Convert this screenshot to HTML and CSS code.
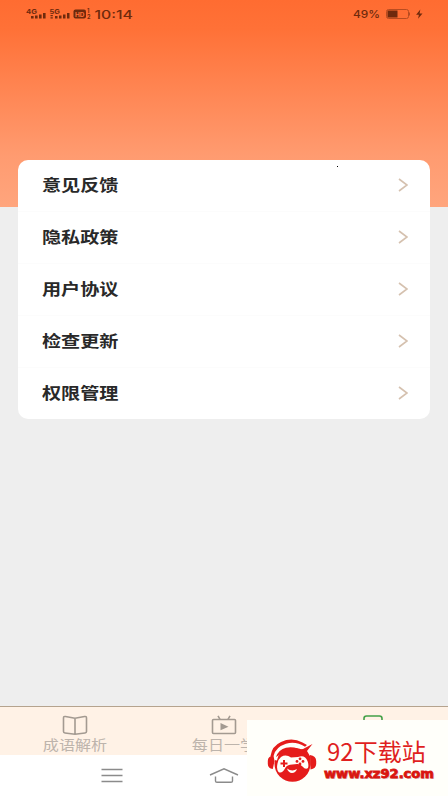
FILE: index.html
```html
<!DOCTYPE html>
<html lang="zh-CN">
<head>
<meta charset="utf-8">
<title>设置</title>
<link rel="stylesheet" href="styles.css">
</head>
<body>
<div class="screen">
  <header class="hero">
    <svg class="status" width="448" height="28" viewBox="0 0 448 28">
      <g class="status-ink">
        <text x="26" y="14" class="net" textLength="11" lengthAdjust="spacingAndGlyphs">4G</text>
        <path d="M31 16h2.6v2.5H31zM35 15.5h2.6v3H35zM39 14.5h2.6v4H39zM43 13h2.6v5.5H43z"/>
        <text x="49.500" y="14" class="net" textLength="10.500" lengthAdjust="spacingAndGlyphs">5G</text>
        <path d="M50.500 15h2.300v1.200h-2.300zM50.500 17.300h2.300v1.200h-2.300zM55 16h2.500v2.500H55zM59 15.500h2.500v3H59zM63 14.500h2.500v4H63zM67 13h2.500v5.500H67z"/>
        <rect x="73.500" y="9.500" width="12.500" height="9" rx="2"/>
        <text x="75" y="16.700" class="hd" textLength="9.500" lengthAdjust="spacingAndGlyphs">HD</text>
        <text x="87" y="13" class="sim">1</text>
        <text x="87" y="19" class="sim">2</text>
        <text x="94.500" y="18.500" class="clock" textLength="38.500" lengthAdjust="spacingAndGlyphs">10:14</text>
        <text x="353" y="18" class="percent" textLength="27" lengthAdjust="spacingAndGlyphs">49%</text>
        <rect class="battery" x="386.500" y="9.500" width="22" height="9" rx="2"/>
        <rect x="387.500" y="10.500" width="10" height="7"/>
        <path class="battery" d="M409.500 12.500v3"/>
        <path d="M420.300 9.500l-4.200 5.200h2.800l-.8 4 4.400-5.300h-2.900z"/>
      </g>
    </svg>
  </header>

  <main class="card">
    <i class="speck"></i>
    <div class="row"><span class="label">意见反馈</span><svg class="chevron" viewBox="0 0 10 14"><path d="M1 1l8 6-8 6"/></svg></div>
    <div class="row"><span class="label">隐私政策</span><svg class="chevron" viewBox="0 0 10 14"><path d="M1 1l8 6-8 6"/></svg></div>
    <div class="row"><span class="label">用户协议</span><svg class="chevron" viewBox="0 0 10 14"><path d="M1 1l8 6-8 6"/></svg></div>
    <div class="row"><span class="label">检查更新</span><svg class="chevron" viewBox="0 0 10 14"><path d="M1 1l8 6-8 6"/></svg></div>
    <div class="row"><span class="label">权限管理</span><svg class="chevron" viewBox="0 0 10 14"><path d="M1 1l8 6-8 6"/></svg></div>
  </main>

  <footer class="bottom">
    <nav class="tabs">
      <div class="tab">
        <svg class="tab-icon" viewBox="0 0 26 22"><path d="M13 3.200L3.500 1.500Q1.500 1.200 1.500 3v13.500q0 1.300 1.500 1.500l10 1.200 10-1.200q1.500-.2 1.500-1.500V3q0-1.800-2-1.500zM13 3.200v16"/></svg>
        <span class="tab-label">成语解析</span>
      </div>
      <div class="tab">
        <svg class="tab-icon" viewBox="0 0 26 22"><rect x="1.500" y="4.500" width="23" height="14" rx="1"/><path d="M7 .8l2 3.500M19 .8l-2 3.500"/><path class="solid" d="M9.500 8l8 3.700-8 3.500z"/></svg>
        <span class="tab-label">每日一学</span>
      </div>
      <div class="tab active">
        <svg class="tab-icon" viewBox="0 0 26 22"><rect x="4" y="1" width="18" height="19" rx="2.500"/></svg>
      </div>
    </nav>
    <div class="system-nav">
      <div class="key"><svg width="22" height="16" viewBox="0 0 22 16"><path d="M.5 1.500h21M.5 7.500h21M.5 13.500h21"/></svg></div>
      <div class="key"><svg width="30" height="16" viewBox="0 0 30 16"><path d="M1 7L15 .8 29 7M6.500 8.500v4.500q0 1.300 1.500 1.300h14q1.500 0 1.500-1.300V8.500"/></svg></div>
    </div>
    <aside class="watermark">
      <svg class="mascot" viewBox="0 0 50 44">
        <ellipse class="red" cx="25.500" cy="25" rx="18" ry="17.800"/>
        <path class="halo" d="M7.500 21Q10 8.500 22 6.500q10-1.500 18 4"/>
        <path class="red" d="M6.500 16.500Q.8 17 .8 22v3q.2 4.500 5 5L7.500 22zM43 16Q49.200 17 49.200 22v3q-.2 4.500-5.700 5.500z"/>
        <path class="red" d="M3.500 17Q5 7 14 3q11-5 21.500.5L40 6l-2 1.700Q29 2 19 4.700 8.500 8 6.500 17z"/>
        <path class="red" d="M9 18Q11.500 10.500 19 8.700q7-1.700 13.500 1.800l3.500-.5 9.500-5-5.500 7 3.500 6V27l-6-11-7.500-3H17z"/>
        <path class="pad" d="M14 18q5-3 10 .5l7-.5q7-2.500 9.500 4 1.500 4 .5 7-2.500 2-5.500-1.500-2.500-3-5.500-2.500l-7 .7q-3.500.5-5 3.800-3 5.500-6.500 3.500-2.300-3-1-8.500.8-4.500 3.500-6.500z"/>
        <path class="plus" d="M13.500 24.500h7M17 21v7"/>
        <g class="red"><circle cx="33" cy="19.800" r="1.400"/><circle cx="30" cy="22.400" r="1.400"/><circle cx="36" cy="22.400" r="1.400"/><circle cx="33" cy="25" r="1.400"/></g>
        <path class="pad" d="M20 29.500q5 3.500 10 .5-1.500 4-5 4-3.500-.2-5-4.500z"/>
      </svg>
      <div class="brand">
        <span class="brand-name">92下载站</span>
        <svg class="brand-url" width="116" height="16" viewBox="0 0 116 16">
          <text class="url-shadow" x="3" y="12.500" textLength="110" lengthAdjust="spacingAndGlyphs">www.xz92.com</text>
          <text class="url" x="2" y="11.500" textLength="110" lengthAdjust="spacingAndGlyphs">www.xz92.com</text>
        </svg>
      </div>
    </aside>
  </footer>
</div>
</body>
</html>
```
FILE: styles.css
```css
* { box-sizing: border-box; }
body {
  margin: 0;
  font-family: "Noto Sans CJK SC", sans-serif;
}
.screen {
  width: 448px;
  height: 796px;
  display: flex;
  flex-direction: column;
  overflow: hidden;
  background: #eee;
}
.hero {
  flex: none;
  height: 207px;
  background: linear-gradient(#ff6c31, #ff7137 14%, #ff9b70 75%, #ffa57d);
}
.status { display: block; }
.status-ink { fill: #6f2a0d; font-family: "Inter", sans-serif; }
.net { font-size: 6.5px; font-weight: 700; }
.hd { font-size: 6.5px; font-weight: 700; fill: #ff7137; }
.sim { font-size: 5.5px; font-weight: 700; }
.clock { font-size: 11.5px; font-weight: 500; }
.percent { font-size: 10px; font-weight: 500; }
.battery { fill: none; stroke: #b94c20; stroke-width: 1; }

.card {
  position: relative;
  flex: none;
  height: 259px;
  margin: -47.5px 18px 0;
  border-radius: 10px;
  background: #fff;
}
.speck {
  position: absolute;
  left: 319px;
  top: 6px;
  width: 1px;
  height: 1px;
  background: #000;
}
.row {
  display: flex;
  align-items: center;
  justify-content: space-between;
  height: 51.8px;
  padding: 0 22px 1px 24px;
}
.row + .row { border-top: 1px solid #fcfcfc; }
.label {
  font-size: 16px;
  line-height: 24px;
  margin-top: -2px;
  font-weight: 700;
  color: #292929;
  transform: scaleX(1.195);
  transform-origin: left;
}
.chevron {
  width: 10px;
  height: 14px;
  fill: none;
  stroke: #d5c1af;
  stroke-width: 1.6;
}

.bottom {
  position: relative;
  margin-top: auto;
  height: 90px;
}
.tabs {
  display: grid;
  grid-template-columns: repeat(3, 1fr);
  height: 49px;
  padding-top: 8px;
  border-top: 1px solid #b5a38e;
  background: #fff2e6;
}
.tab {
  display: flex;
  flex-direction: column;
  align-items: center;
}
.tab-icon {
  flex: none;
  width: 26px;
  height: 22px;
  fill: none;
  stroke: #a39a91;
  stroke-width: 1.6;
}
.tab-icon .solid { fill: #a39a91; stroke: none; }
.active .tab-icon { stroke: #43a047; }
.tab-label {
  margin-top: -2px;
  font-size: 13.5px;
  line-height: 18px;
  color: #bdb4ac;
  white-space: nowrap;
  transform: scaleX(1.19);
}
.system-nav {
  display: grid;
  grid-template-columns: repeat(3, 1fr);
  height: 41px;
  background: #fff;
}
.key {
  display: flex;
  justify-content: center;
  padding-top: 13px;
}
.key:first-child { padding-left: 75px; }
.key svg { fill: none; stroke: #8b8b8b; stroke-width: 1.4; }

.watermark {
  position: absolute;
  right: 0;
  bottom: 0;
  width: 201px;
  height: 76px;
  display: flex;
  padding: 19px 0 0 20px;
  background: #fffffa;
}
.mascot { flex: none; width: 50px; height: 44px; }
.red { fill: #e51c1b; }
.halo { fill: none; stroke: #fffffa; stroke-width: 5; }
.pad { fill: #fffffa; }
.plus { stroke: #e51c1b; stroke-width: 2; }
.brand {
  display: flex;
  flex-direction: column;
  padding-left: 5px;
}
.brand-name {
  padding-left: 5px;
  font-size: 24px;
  line-height: 30px;
  margin-top: -3px;
  color: #e01f1f;
  white-space: nowrap;
}
.brand-url {
  margin-top: 0;
  font-family: "DejaVu Sans", sans-serif;
  font-size: 12px;
  font-weight: 700;
}
.url { fill: #d9150f; stroke: #d9150f; stroke-width: .8; }
.url-shadow { fill: #d8c2bd; }
```
